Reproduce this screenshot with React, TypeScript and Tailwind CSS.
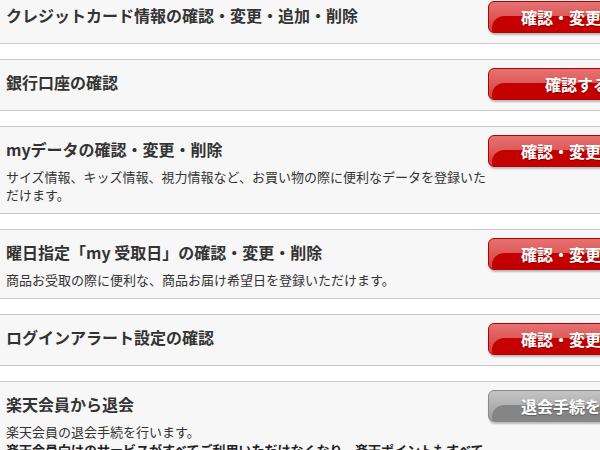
type Item = {
  title: string;
  desc?: string[];
  button: string;
  grey?: boolean;
};

const items: Item[] = [
  { title: 'クレジットカード情報の確認・変更・追加・削除', button: '確認・変更する' },
  { title: '銀行口座の確認', button: '確認する' },
  {
    title: 'myデータの確認・変更・削除',
    desc: ['サイズ情報、キッズ情報、視力情報など、お買い物の際に便利なデータを登録いただけます。'],
    button: '確認・変更する',
  },
  {
    title: '曜日指定「my 受取日」の確認・変更・削除',
    desc: ['商品お受取の際に便利な、商品お届け希望日を登録いただけます。'],
    button: '確認・変更する',
  },
  { title: 'ログインアラート設定の確認', button: '確認・変更する' },
  {
    title: '楽天会員から退会',
    desc: ['楽天会員の退会手続を行います。'],
    button: '退会手続をする',
    grey: true,
  },
];

function GlossButton({ label, grey }: { label: string; grey?: boolean }) {
  return (
    <button
      className={
        grey
          ? 'relative w-[178px] h-8 rounded-[6px] overflow-hidden border border-[#8a8a8a] bg-gradient-to-b from-[#c4c4c4] to-[#9c9c9c] shadow-[1px_2px_2px_rgba(0,0,0,0.25)]'
          : 'relative w-[178px] h-8 rounded-[6px] overflow-hidden border border-[#b30000] bg-gradient-to-b from-[#e67272] to-[#d23c3c] shadow-[1px_2px_2px_rgba(0,0,0,0.25)]'
      }
    >
      <span
        className={
          grey
            ? 'absolute left-[3px] right-0 bottom-0 top-[14px] rounded-tl-[12px] bg-[#858585]'
            : 'absolute left-[3px] right-0 bottom-0 top-[14px] rounded-tl-[12px] bg-[#c40000]'
        }
      />
      <span className="relative text-white font-bold text-[16px] leading-6 [text-shadow:0_1px_1px_rgba(0,0,0,0.3)]">
        {label}
      </span>
    </button>
  );
}

export default function App() {
  return (
    <div className="w-[600px] h-[450px] overflow-hidden bg-white text-[#333] [font-family:'Noto_Sans_CJK_JP',sans-serif]">
      <div className="w-[680px] -mt-[8px] flex flex-col gap-[15px]">
        {items.map((item, i) => (
          <div key={i} className="flex bg-[#f7f7f7] border-y border-[#c9c9c9]">
            <div className="w-[482px] ml-[6px] pt-[10px] pb-[9px]">
              <h3 className="text-[16px] font-bold leading-6">{item.title}</h3>
              {item.desc && (
                <p className="mt-[7px] text-[13px] leading-[18px]">
                  {item.desc.map((d, j) => (
                    <span key={j}>{d}</span>
                  ))}
                </p>
              )}
              {item.grey && (
                <p className="text-[13px] leading-[18px] font-bold text-[#222]">
                  楽天会員向けのサービスがすべてご利用いただけなくなり、楽天ポイントもすべて失効します。
                </p>
              )}
            </div>
            <div className="pt-2 pb-[10px]">
              <GlossButton label={item.button} grey={item.grey} />
            </div>
          </div>
        ))}
      </div>
    </div>
  );
}
